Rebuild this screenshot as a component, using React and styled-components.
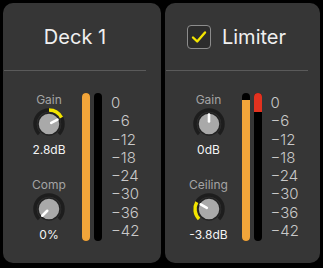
import React from 'react';
import styled, { createGlobalStyle } from 'styled-components';

const GlobalStyle = createGlobalStyle`
  html, body {
    margin: 0;
    padding: 0;
    background: #000;
  }
  body {
    font-family: Inter, "Open Sans", "Liberation Sans", sans-serif;
  }
`;

const Rack = styled.div`
  display: flex;
  gap: 4px;
  padding: 3px;
  width: 323px;
  height: 268px;
  box-sizing: border-box;
`;

const Panel = styled.div`
  width: ${(p) => p.$width}px;
  height: 260px;
  background: #363636;
  border-radius: 10px;
  display: flex;
  flex-direction: column;
`;

const Header = styled.div`
  height: 67px;
  margin-left: 1px;
  width: 142px;
  display: flex;
  align-items: center;
  justify-content: center;
  gap: 11px;
  border-bottom: 1px solid #5a5a5a;
`;

const Title = styled.div`
  color: #f0f0f0;
  font-size: 20px;
  font-weight: 400;
`;

const CheckBox = styled.div`
  width: 24px;
  height: 24px;
  box-sizing: border-box;
  border: 1.5px solid #8c8c8c;
  border-radius: 4px;
  background: #2c2c2c;
  display: flex;
  align-items: center;
  justify-content: center;
`;

const Body = styled.div`
  display: flex;
  align-items: flex-start;
  padding: 22px 0 0 ${(p) => p.$offset}px;
`;

const KnobColumn = styled.div`
  width: 60px;
  display: flex;
  flex-direction: column;
  gap: 21px;
`;

const KnobGroup = styled.div`
  display: flex;
  flex-direction: column;
  align-items: center;
`;

const KnobLabel = styled.div`
  color: #a4a4a4;
  font-size: 12px;
  line-height: 14px;
`;

const KnobValue = styled.div`
  color: #f4f4f4;
  font-size: 12px;
  line-height: 14px;
  margin-top: 2px;
`;

const Meters = styled.div`
  display: flex;
  gap: 4px;
  margin-left: 3px;
`;

const Bar = styled.div`
  position: relative;
  width: 8px;
  height: 148px;
  background: #000;
  border-radius: 4px;
  overflow: hidden;
`;

const Fill = styled.div`
  position: absolute;
  left: 0;
  right: 0;
  ${(p) => (p.$fromTop ? 'top: 0;' : 'bottom: 0;')}
  background: ${(p) => p.$color};
`;

const Scale = styled.div`
  margin-left: 9px;
  display: flex;
  flex-direction: column;
  color: #c9c9c9;
  font-size: 15px;
  font-weight: 300;
  line-height: 18.3px;
  margin-top: 1px;
`;

const YELLOW = '#f3e500';
const SIZE = 34;
const C = SIZE / 2;

function polar(r, deg) {
  const a = (deg * Math.PI) / 180;
  return [C + r * Math.sin(a), C - r * Math.cos(a)];
}

function arc(r, from, to) {
  const [x1, y1] = polar(r, from);
  const [x2, y2] = polar(r, to);
  const large = to - from > 180 ? 1 : 0;
  return `M ${x1} ${y1} A ${r} ${r} 0 ${large} 1 ${x2} ${y2}`;
}

function Knob({ label, text, value, min, max, bipolar }) {
  const angle = -135 + ((value - min) / (max - min)) * 270;
  const start = bipolar ? 0 : -135;
  const from = Math.min(start, angle);
  const to = Math.max(start, angle);
  const [px1, py1] = polar(2.5, angle);
  const [px2, py2] = polar(9.5, angle);

  return (
    <KnobGroup>
      <KnobLabel>{label}</KnobLabel>
      <svg width={SIZE} height={SIZE} viewBox={`0 0 ${SIZE} ${SIZE}`}>
        <path d={arc(14, -135, 135)} stroke="#1d1d1d" strokeWidth="3.5" fill="none" />
        {to - from > 1 && (
          <path d={arc(14, from, to)} stroke={YELLOW} strokeWidth="3.5" fill="none" />
        )}
        <circle cx={C} cy={C} r="11" fill="#a9a9a9" stroke="#222" strokeWidth="1.5" />
        <line x1={px1} y1={py1} x2={px2} y2={py2} stroke="#fff" strokeWidth="2.6" strokeLinecap="round" />
      </svg>
      <KnobValue>{text}</KnobValue>
    </KnobGroup>
  );
}

const scale = ['0', '-6', '-12', '-18', '-24', '-30', '-36', '-42'];

function Strip({ width, offset, header, knobs, level, reduction }) {
  return (
    <Panel $width={width}>
      <Header>{header}</Header>
      <Body $offset={offset}>
        <KnobColumn>
          {knobs.map((k) => (
            <Knob key={k.label} {...k} />
          ))}
        </KnobColumn>
        <Meters>
          <Bar>
            <Fill $color="#f2a53a" style={{ height: `${level * 100}%` }} />
          </Bar>
          <Bar>
            <Fill $fromTop $color="#e3321f" style={{ height: `${reduction * 100}%` }} />
          </Bar>
        </Meters>
        <Scale>
          {scale.map((s) => (
            <div key={s}>{s.replace('-', '\u2212')}</div>
          ))}
        </Scale>
      </Body>
    </Panel>
  );
}

function Check() {
  return (
    <CheckBox>
      <svg width="18" height="18" viewBox="0 0 18 18">
        <path d="M3 9.5 L7.2 13.5 L15 4.5" stroke={YELLOW} strokeWidth="2.4" fill="none" strokeLinecap="round" strokeLinejoin="round" />
      </svg>
    </CheckBox>
  );
}

export default function App() {
  return (
    <>
      <GlobalStyle />
      <Rack>
        <Strip
          width={158}
          offset={16}
          header={<Title>Deck 1</Title>}
          level={1}
          reduction={0}
          knobs={[
            { label: 'Gain', text: '2.8dB', value: 2.8, min: -6, max: 6, bipolar: true },
            { label: 'Comp', text: '0%', value: 0, min: 0, max: 100 },
          ]}
        />
        <Strip
          width={156}
          offset={14}
          header={
            <>
              <Check />
              <Title>Limiter</Title>
            </>
          }
          level={0.953}
          reduction={0.128}
          knobs={[
            { label: 'Gain', text: '0dB', value: 0, min: -6, max: 6, bipolar: true },
            { label: 'Ceiling', text: '-3.8dB', value: -3.8, min: -6, max: 2 },
          ]}
        />
      </Rack>
    </>
  );
}
